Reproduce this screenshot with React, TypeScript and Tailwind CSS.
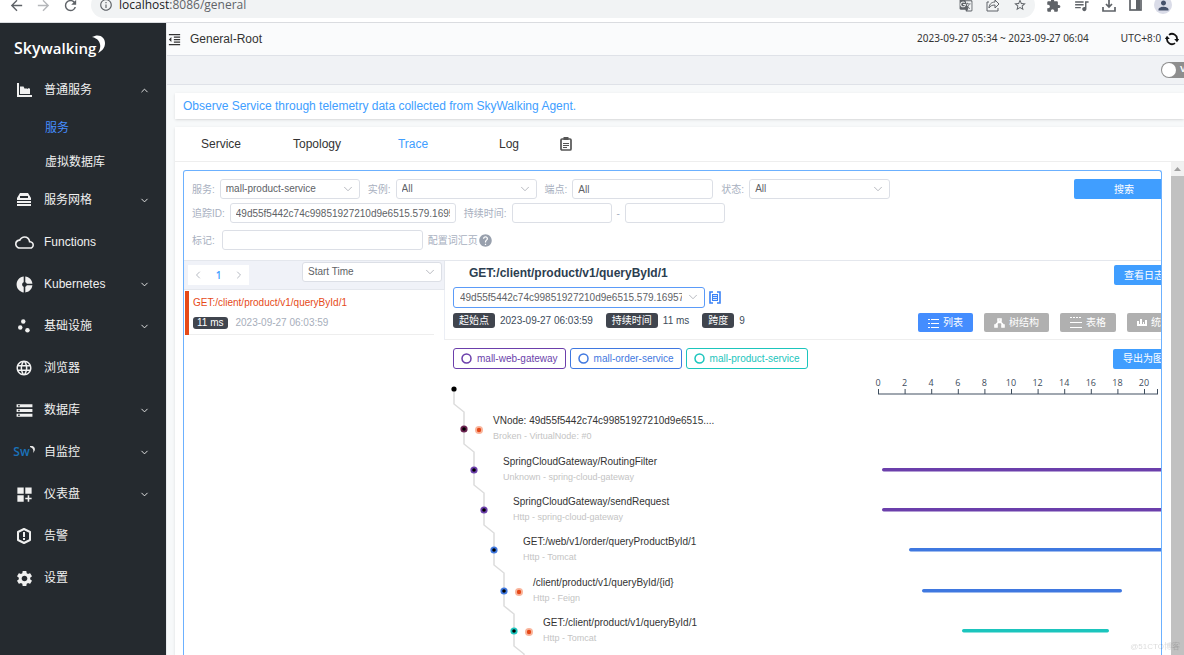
import type { ReactNode } from "react";
import {
  MdArrowBack,
  MdArrowForward,
  MdCloudQueue,
  MdDashboardCustomize,
  MdDonutSmall,
  MdExtension,
  MdFormatIndentDecrease,
  MdGTranslate,
  MdHelp,
  MdInfoOutline,
  MdLanguage,
  MdPerson,
  MdQueueMusic,
  MdRefresh,
  MdScatterPlot,
  MdSettings,
  MdStarBorder,
  MdStorage,
} from "react-icons/md";
import { ChevronDown, ChevronLeft, ChevronRight, ChevronUp } from "lucide-react";

const purple = "#6b3fab";
const blue = "#3f78e0";
const teal = "#1bc5bd";

type Span = {
  title: string;
  detail: string;
  color: string;
  isError?: boolean;
  bar?: [number, number];
};

const spans: Span[] = [
  {
    title: "VNode: 49d55f5442c74c99851927210d9e6515....",
    detail: "Broken - VirtualNode: #0",
    color: "#6b2350",
    isError: true,
  },
  {
    title: "SpringCloudGateway/RoutingFilter",
    detail: "Unknown - spring-cloud-gateway",
    color: purple,
    bar: [10, 310],
  },
  {
    title: "SpringCloudGateway/sendRequest",
    detail: "Http - spring-cloud-gateway",
    color: purple,
    bar: [10, 310],
  },
  {
    title: "GET:/web/v1/order/queryProductById/1",
    detail: "Http - Tomcat",
    color: blue,
    bar: [37, 310],
  },
  {
    title: "/client/product/v1/queryById/{id}",
    detail: "Http - Feign",
    color: blue,
    isError: true,
    bar: [50, 250],
  },
  {
    title: "GET:/client/product/v1/queryById/1",
    detail: "Http - Tomcat",
    color: teal,
    isError: true,
    bar: [90, 237],
  },
];

// y of every tree node, root first; the last one is below the fold
const nodeY = [17, 57, 98, 138, 178, 219, 259, 299];

const services = [
  { name: "mall-web-gateway", className: "border-[#6b3fab] text-[#6b3fab]" },
  { name: "mall-order-service", className: "border-[#3f78e0] text-[#3f78e0]" },
  { name: "mall-product-service", className: "border-[#1bc5bd] text-[#1bc5bd]" },
];

const tabs = ["Service", "Topology", "Trace", "Log"];

function AreaChartIcon() {
  return (
    <svg width="16" height="16" viewBox="0 0 16 16" fill="currentColor">
      <path d="M1 1h2v12h13v2H1z" />
      <path d="M4 12V5l1-1 1 1 1-1 2 3 1-1 1 1 2-1 1 1v5z" />
    </svg>
  );
}

function MeshIcon() {
  return (
    <svg width="16" height="16" viewBox="0 0 16 16" fill="currentColor">
      <path d="M4 1h8l3 5v2H1V6zm0 3v2h8V4z" fillRule="evenodd" />
      <path d="M1 9h14v2H1zM1 12h14v2H1z" />
    </svg>
  );
}

function AlarmIcon() {
  return (
    <svg width="18" height="18" viewBox="0 0 18 18" fill="none" stroke="currentColor" strokeWidth="2">
      <path d="M9 2l6 3v8l-6 3-6-3V5z" strokeLinejoin="round" />
      <path d="M9 5v5M9 11v2" />
    </svg>
  );
}

function SwIcon() {
  return (
    <span className="flex h-5 w-5 items-center justify-center font-['Open_Sans',sans-serif] text-xs font-semibold text-[#1a72bb]">
      Sw
      <svg width="5" height="8" viewBox="0 0 5 8" className="mb-1 shrink-0" fill="#e8e8e8">
        <path d="M0 0c4-1 7 3 3 7 1-3 0-5-3-6z" />
      </svg>
    </span>
  );
}

function ClipboardIcon() {
  return (
    <svg width="14" height="16" viewBox="0 0 14 16" fill="none" stroke="#555" strokeWidth="1.7">
      <rect x="2" y="3" width="10" height="11" rx="1" />
      <path d="M4.5 2.5h5" strokeWidth="3" />
      <path d="M4 7.5h6M4 9.5h6M4 11.5h4" strokeWidth="1" />
    </svg>
  );
}

function SyncIcon() {
  return (
    <svg width="14" height="14" viewBox="0 0 14 14" fill="none" stroke="#111" strokeWidth="1.8">
      <path d="M4 2.9A5 5 0 0 1 12 7.5M10 11.1A5 5 0 0 1 2 6.5" />
      <path d="M9.2 7h5L12 10.2zM4.8 7h-5L2 3.8z" fill="#111" stroke="none" />
    </svg>
  );
}

function CopyIcon() {
  return (
    <svg width="12" height="13" viewBox="0 0 12 13" fill="none" stroke="#3b82f6">
      <path d="M4 1H1v11h3M8 1h3v11H8" strokeWidth="1.6" />
      <rect x="3.5" y="3.5" width="5" height="6" fill="#d8e7ff" />
      <path d="M4 5.5h4M4 7.5h4" />
    </svg>
  );
}

type MenuItem = { label: string; icon: ReactNode; arrow?: "up" | "down"; children?: string[] };

const menu: MenuItem[] = [
  { label: "普通服务", icon: <AreaChartIcon />, arrow: "up", children: ["服务", "虚拟数据库"] },
  { label: "服务网格", icon: <MeshIcon />, arrow: "down" },
  { label: "Functions", icon: <MdCloudQueue size={19} /> },
  { label: "Kubernetes", icon: <MdDonutSmall size={19} />, arrow: "down" },
  { label: "基础设施", icon: <MdScatterPlot size={18} />, arrow: "down" },
  { label: "浏览器", icon: <MdLanguage size={18} /> },
  { label: "数据库", icon: <MdStorage size={19} />, arrow: "down" },
  { label: "自监控", icon: <SwIcon />, arrow: "down" },
  { label: "仪表盘", icon: <MdDashboardCustomize size={19} />, arrow: "down" },
  { label: "告警", icon: <AlarmIcon /> },
  { label: "设置", icon: <MdSettings size={19} /> },
];

function BrowserBar() {
  return (
    <div className="flex h-[23px] shrink-0 items-end overflow-hidden border-b border-[#dadce0] bg-white pr-3 pb-1 text-[#5f6368]">
      <div className="flex h-[26px] items-center gap-2 pl-2">
        <button aria-label="Back"><MdArrowBack size={17} /></button>
        <button aria-label="Forward" className="pl-[2px] text-[#b5b7ba]"><MdArrowForward size={17} /></button>
        <button aria-label="Reload" className="pl-[2px]"><MdRefresh size={17} /></button>
      </div>
      <div className="ml-3 flex h-[26px] flex-1 items-center gap-[13px] rounded-full bg-[#f1f3f4] pr-2 pl-2">
        <div className="flex flex-1 items-center gap-[6px]">
          <MdInfoOutline size={14} />
          <span className="font-['Open_Sans',sans-serif] text-xs leading-[10px]">
            <span className="text-[#202124]">localhost</span>:8086/general
          </span>
        </div>
        <button aria-label="Translate"><MdGTranslate size={14} /></button>
        <button aria-label="Share">
          <svg width="14" height="14" viewBox="0 0 14 14" fill="none" stroke="currentColor">
            <path d="M3 4H1v9h11v-3" />
            <path d="M9 2l4 4-4 4V7C6 7 4 8 3 10c0-3 2-6 6-6z" />
          </svg>
        </button>
        <button aria-label="Bookmark"><MdStarBorder size={14} /></button>
      </div>
      <div className="ml-[11px] flex h-[26px] items-center gap-3">
        <MdExtension size={15} />
        <MdQueueMusic size={17} />
        <svg width="14" height="14" viewBox="0 0 14 14" fill="none" stroke="currentColor" strokeWidth="1.7">
          <path d="M7 0v8M4 6l3 3 3-3M1 9v4h12V9" />
        </svg>
        <svg width="14" height="14" viewBox="0 0 14 14" fill="none" stroke="currentColor" strokeWidth="1.7">
          <rect x="2" y="1" width="11" height="11" />
          <path d="M10 1v11" strokeWidth="4" />
        </svg>
        <span className="flex h-[18px] w-[18px] items-center justify-center rounded-full bg-[#dadce8] text-[#45516b]">
          <MdPerson size={15} />
        </span>
      </div>
    </div>
  );
}

function Sidebar() {
  return (
    <nav className="w-[166px] shrink-0 bg-[#252a2f] text-xs text-[#f0f0f0]">
      <div className="flex h-[46px] items-center pt-1 pl-[14px]">
        <a href="/" className="flex items-baseline font-['Open_Sans',sans-serif] font-semibold text-white">
          <span className="text-base">Sky</span>
          <span className="text-[15px]">walking</span>
        </a>
        <svg width="13" height="19" viewBox="0 0 13 19" fill="#fff" className="-ml-1 mb-2 shrink-0">
          <path d="M0 2c7-4 13 0 13 6 0 5-3 8-7 10 4-6 3-14-6-16z" />
        </svg>
      </div>
      <ul>
        {menu.map((item) => (
          <li key={item.label}>
            <a href="#" className="flex h-[42px] items-center pr-4 pl-[14px]">
              <span className="flex w-5 shrink-0 justify-center">{item.icon}</span>
              <span className="ml-[10px] flex-1">{item.label}</span>
              {item.arrow === "up" && <ChevronUp size={11} strokeWidth={2} />}
              {item.arrow === "down" && <ChevronDown size={11} strokeWidth={2} />}
            </a>
            {item.children?.map((child, i) => (
              <a
                key={child}
                href="#"
                className={`flex h-[34px] items-center pl-[45px] ${i === 0 ? "text-[#448dfe]" : ""}`}
              >
                {child}
              </a>
            ))}
          </li>
        ))}
      </ul>
    </nav>
  );
}

type SelectProps = { id: string; value: string; label?: string; className: string };

function Select({ id, value, label, className }: SelectProps) {
  return (
    <div className={`relative h-5 shrink-0 ${className}`}>
      <select
        id={id}
        aria-label={label}
        className="block h-full w-full appearance-none truncate rounded-[3px] border border-[#dcdfe6] bg-white pr-5 pl-[5px] text-[10px] leading-[18px] text-[#606266]"
      >
        <option>{value}</option>
      </select>
      <ChevronDown
        size={14}
        strokeWidth={1.4}
        className="pointer-events-none absolute top-[3px] right-[5px] text-[#a8abb2]"
      />
    </div>
  );
}

function Field({ id, label, children }: { id: string; label: string; children: ReactNode }) {
  return (
    <div className="flex items-center gap-[5px]">
      <label htmlFor={id}>{label}</label>
      {children}
    </div>
  );
}

const inputStyle =
  "h-5 rounded-[3px] border border-[#dcdfe6] bg-white px-[5px] text-[10px] leading-4 text-[#606266]";

function Filters() {
  return (
    <form
      className="flex flex-col gap-1 border-b border-[#e4e7ed] pt-2 pb-[10px] pl-2 text-[10px] whitespace-nowrap text-[#a8b0c0]"
      onSubmit={(e) => e.preventDefault()}
    >
      <div className="flex items-center gap-2">
        <Field id="service" label="服务:">
          <Select id="service" value="mall-product-service" className="w-[140px]" />
        </Field>
        <Field id="instance" label="实例:">
          <Select id="instance" value="All" className="w-[141px]" />
        </Field>
        <Field id="endpoint" label="端点:">
          <input id="endpoint" defaultValue="All" className={`${inputStyle} w-[141px]`} />
        </Field>
        <Field id="status" label="状态:">
          <Select id="status" value="All" className="w-[141px]" />
        </Field>
        <button className="-mr-[13px] ml-auto h-5 w-[100px] shrink-0 rounded-[2px] bg-[#409eff] text-white">
          搜索
        </button>
      </div>
      <div className="flex items-center gap-2">
        <Field id="traceId" label="追踪ID:">
          <input
            id="traceId"
            defaultValue="49d55f5442c74c99851927210d9e6515.579.16957946398740001"
            className={`${inputStyle} w-[226px]`}
          />
        </Field>
        <Field id="minDuration" label="持续时间:">
          <input id="minDuration" className={`${inputStyle} w-[100px]`} />
          <span>-</span>
          <input aria-label="Max duration" className={`${inputStyle} w-[100px]`} />
        </Field>
      </div>
      <div className="flex items-center gap-[5px] pt-[3px]">
        <label htmlFor="tags" className="pr-[2px]">标记:</label>
        <input id="tags" className={`${inputStyle} w-[201px]`} />
        <a href="#" className="flex items-center">
          配置词汇页
          <MdHelp size={15} className="text-[#98a0ad]" />
        </a>
      </div>
    </form>
  );
}

function TraceList() {
  return (
    <div className="w-[261px] shrink-0 text-[10px]">
      <div className="flex h-[29px] items-start justify-between border-r border-b border-[#e4e7ed] bg-[#f0f2f8] pt-px pr-[2px] pl-1">
        <div className="mt-[3px] flex h-5 w-[61px] items-center justify-between bg-white px-1 text-[#b6bac2]">
          <button aria-label="Previous page"><ChevronLeft size={12} /></button>
          <button className="font-['Open_Sans',sans-serif] font-semibold text-[#409eff]">1</button>
          <button aria-label="Next page"><ChevronRight size={12} /></button>
        </div>
        <Select id="order" label="Order" value="Start Time" className="w-[140px]" />
      </div>
      <div className="flex h-[50px] border-r border-[#ebeef5] pt-px">
        <div className="ml-px h-11 flex-1 border-l-4 border-[#e64a19]">
          <div className="mr-[10px] flex h-full flex-col justify-center gap-1 border-b border-[#eee] pl-1">
            <a href="#" className="leading-4 text-[#e64a19]">GET:/client/product/v1/queryById/1</a>
            <div className="flex items-center gap-2 text-[#a7aebb]">
              <span className="rounded-[3px] bg-[#40454e] px-1 leading-3 text-white">11 ms</span>
              2023-09-27 06:03:59
            </div>
          </div>
        </div>
      </div>
    </div>
  );
}

function Badge({ name, value }: { name: string; value: string }) {
  return (
    <div className="flex items-center gap-[5px]">
      <span className="rounded-[3px] bg-[#40454e] px-[6px] leading-[15px] text-white">{name}</span>
      <span>{value}</span>
    </div>
  );
}

function DetailHeader() {
  const viewBtn = "flex h-[19px] shrink-0 items-center gap-1 rounded-[2px] px-[10px] text-white";
  return (
    <div className="h-[79px] border-b border-[#eee] pl-2 text-[10px] text-[#3d4c5c]">
      <div className="flex items-center pt-1">
        <h2 className="ml-4 flex-1 pb-[3px] text-xs leading-[17px] font-bold text-[#2c3e50]">
          GET:/client/product/v1/queryById/1
        </h2>
        <button className="-mr-[13px] h-5 shrink-0 rounded-[2px] bg-[#409eff] px-[10px] whitespace-nowrap text-white">
          查看日志
        </button>
      </div>
      <div className="flex items-center gap-1 pt-[2px]">
        <div className="relative w-[252px]">
          <select
            aria-label="Trace ID"
            className="block h-[21px] w-full appearance-none overflow-hidden rounded-[3px] border border-[#5b9bf8] bg-white pr-[22px] pl-[6px] text-[10px] leading-4 text-[#606266]"
          >
            <option>49d55f5442c74c99851927210d9e6515.579.16957946398740001</option>
          </select>
          <ChevronDown
            size={14}
            strokeWidth={1.4}
            className="pointer-events-none absolute top-[3px] right-[5px] text-[#a8abb2]"
          />
        </div>
        <button aria-label="Copy trace ID"><CopyIcon /></button>
      </div>
      <div className="flex items-center whitespace-nowrap">
        <div className="flex flex-1 items-center gap-[13px]">
          <Badge name="起始点" value="2023-09-27 06:03:59" />
          <Badge name="持续时间" value="11 ms" />
          <Badge name="跨度" value="9" />
        </div>
        <div className="-mr-5 flex gap-[11px] pt-[5px]">
          <button className={`${viewBtn} bg-[#448dfe]`}>
            <svg width="11" height="10" viewBox="0 0 11 10" stroke="currentColor">
              <path d="M0 1.5h2M3 1.5h8M0 5.5h2M3 5.5h8M0 9.5h2M3 9.5h8" />
            </svg>
            列表
          </button>
          <button className={`${viewBtn} bg-[#b0b0b0]`}>
            <svg width="11" height="10" viewBox="0 0 11 10" fill="none" stroke="currentColor" strokeWidth="1.6">
              <path d="M4 1h3v2H4zM5.5 3v2M2 6.5l2-2h3l2 2M1 7h2v2H1zM8 7h2v2H8z" />
            </svg>
            树结构
          </button>
          <button className={`${viewBtn} bg-[#b0b0b0]`}>
            <svg width="12" height="12" viewBox="0 0 12 12" stroke="currentColor">
              <path d="M0 .5h12" strokeDasharray="2 1" />
              <path d="M0 5.5h12M0 10.5h12" />
            </svg>
            表格
          </button>
          <button className={`${viewBtn} bg-[#b0b0b0]`}>
            <svg width="10" height="9" viewBox="0 0 10 9" fill="currentColor">
              <path d="M0 3h2v3h1V1h2v5h1V4h1v2h1V2h2v6H0z" />
            </svg>
            统计
          </button>
        </div>
      </div>
    </div>
  );
}

function SpanTree() {
  return (
    <svg height="290" className="block min-w-0 flex-1 overflow-visible text-[10px]">
      {nodeY.slice(0, -1).map((y, i) => {
        const x = 8 + i * 10;
        return (
          <path
            key={y}
            d={`M${x} ${y}v15l10 8V${nodeY[i + 1]}`}
            fill="none"
            stroke="#dcdcdc"
            strokeWidth="1.5"
          />
        );
      })}
      <circle cx="8" cy="17" r="2.6" fill="#000" />
      {spans.map((span, i) => {
        const x = 18 + i * 10;
        const y = nodeY[i + 1];
        return (
          <g key={span.title}>
            <circle cx={x} cy={y} r="3.6" fill={span.color} />
            <circle cx={x} cy={y} r="1.8" fill="#000" />
            {span.isError && (
              <>
                <circle cx={x + 15} cy={y + 1} r="4" fill="#f9b59c" />
                <circle cx={x + 15} cy={y + 1} r="2.2" fill="#e64a19" />
              </>
            )}
            <text x={x + 29} y={y - 5} fill="#333">{span.title}</text>
            <text x={x + 29} y={y + 10} fill="#c4c4c4" className="text-[9px]">{span.detail}</text>
          </g>
        );
      })}
    </svg>
  );
}

function Timeline() {
  const ticks = [0, 2, 4, 6, 8, 10, 12, 14, 16, 18, 20];
  return (
    <svg height="290" className="block w-[289px] shrink-0">
      <path d="M6 22H286" stroke="#808a96" strokeWidth="1.5" fill="none" />
      <path d="M285.5 17v5" stroke="#3d4c5c" />
      {ticks.map((tick) => (
        <g key={tick}>
          <path d={`M${6.5 + tick * 13.3} 17v5`} stroke="#3d4c5c" />
          <text
            x={6 + tick * 13.3}
            y="14"
            textAnchor="middle"
            fill="#3d4c5c"
            className="font-['Open_Sans',sans-serif] text-[9px]"
          >
            {tick}
          </text>
        </g>
      ))}
      {spans.map(
        (span, i) =>
          span.bar && (
            <rect
              key={span.title}
              x={span.bar[0]}
              y={nodeY[i + 1] - 2}
              width={span.bar[1] - span.bar[0]}
              height="3.5"
              rx="1.7"
              fill={span.color}
            />
          )
      )}
    </svg>
  );
}

function TraceDetail() {
  return (
    <div className="min-w-0 flex-1 text-[10px]">
      <DetailHeader />
      <div className="flex items-center gap-1 pt-2 pl-2 whitespace-nowrap">
        {services.map((service) => (
          <span
            key={service.name}
            className={`flex h-[21px] items-center gap-[5px] rounded-[3px] border px-[7px] ${service.className}`}
          >
            <svg width="11" height="11" viewBox="0 0 11 11" fill="none" stroke="currentColor" strokeWidth="1.5">
              <circle cx="5.5" cy="5.5" r="4.5" />
            </svg>
            {service.name}
          </span>
        ))}
        <button className="-mr-[22px] ml-auto h-5 shrink-0 rounded-[2px] bg-[#409eff] px-[10px] text-white">
          导出为图片
        </button>
      </div>
      <div className="flex pt-[3px] pl-px">
        <SpanTree />
        <Timeline />
      </div>
    </div>
  );
}

function Scrollbar() {
  return (
    <div className="flex w-[13px] shrink-0 flex-col bg-[#f1f1f1]">
      <div className="flex h-[14px] items-center justify-center">
        <svg width="7" height="4" viewBox="0 0 7 4" fill="#a0a0a0">
          <path d="M0 4l3.5-4L7 4z" />
        </svg>
      </div>
      <div className="flex-1 bg-[#c1c1c1]" />
    </div>
  );
}

export default function App() {
  return (
    <div className="flex h-screen flex-col overflow-hidden bg-[#f7f9fa] font-['Liberation_Sans','Noto_Sans_CJK_SC',sans-serif]">
      <BrowserBar />
      <div className="flex min-h-0 flex-1">
        <Sidebar />
        <main className="flex min-w-0 flex-1 flex-col overflow-hidden border-l border-[#e8eaed]">
          <header className="flex h-[33px] shrink-0 items-center border-b border-[#dfe2e8] bg-[#fafbfc] pr-[5px] text-xs text-[#333]">
            <button aria-label="Collapse menu"><MdFormatIndentDecrease size={15} /></button>
            <h1 className="ml-2 flex-1">General-Root</h1>
            <span className="font-['Noto_Sans',sans-serif] text-[10px]">
              2023-09-27 05:34 ~ 2023-09-27 06:04
            </span>
            <span className="ml-8 text-[10px]">UTC+8:0</span>
            <button aria-label="Refresh" className="ml-1"><SyncIcon /></button>
          </header>
          <div className="flex h-[29px] shrink-0 items-center justify-end border-b border-[#dfe2e8] bg-[#f0f2f5]">
            <button
              role="switch"
              aria-checked="false"
              aria-label="View mode"
              className="-mr-5 flex h-4 w-[43px] items-center gap-1 rounded-full bg-[#8e8e8e] p-px text-[9px] font-bold text-white"
            >
              <span className="h-[14px] w-[14px] shrink-0 rounded-full bg-white" />
              V
            </button>
          </div>
          <p className="mt-2 ml-2 h-[26px] shrink-0 bg-white px-2 text-xs leading-[26px] text-[#409eff] shadow-sm">
            Observe Service through telemetry data collected from SkyWalking Agent.
          </p>
          <section className="mt-2 ml-2 flex min-h-0 flex-1 flex-col bg-white shadow">
            <div className="flex h-[35px] shrink-0 items-center gap-1 border-b border-[#eee] text-xs text-[#333]">
              {tabs.map((tab) => (
                <button key={tab} className={`w-[92px] ${tab === "Trace" ? "text-[#409eff]" : ""}`}>
                  {tab}
                </button>
              ))}
              <button aria-label="Copy dashboard"><ClipboardIcon /></button>
            </div>
            <div className="flex min-h-0 flex-1">
              <div className="mt-2 mr-[9px] ml-2 flex min-w-0 flex-1 flex-col overflow-hidden rounded-t-[3px] border border-b-0 border-[#6cb1ff]">
                <Filters />
                <div className="flex flex-1">
                  <TraceList />
                  <TraceDetail />
                </div>
              </div>
              <Scrollbar />
            </div>
          </section>
          <span className="pointer-events-none fixed right-1 bottom-[2px] text-[8px] text-black/15">
            @51CTO博客
          </span>
        </main>
      </div>
    </div>
  );
}
